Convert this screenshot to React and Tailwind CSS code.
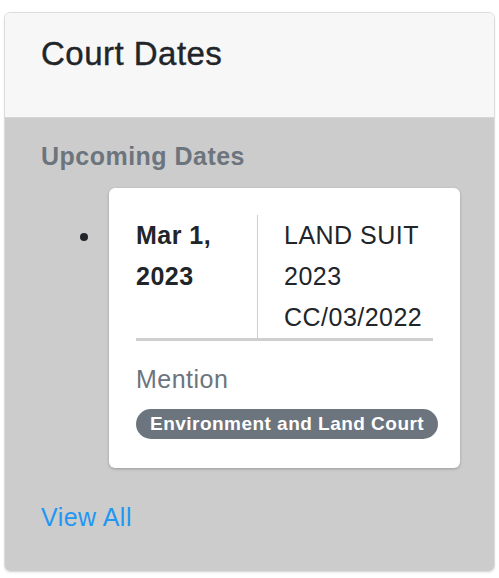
export default function App() {
  return (
    <div className="min-h-screen bg-white px-[4px] pt-[12px] font-['Liberation_Sans',Arial,sans-serif] tracking-[0.03em]">
      <div className="w-[491px] overflow-hidden rounded-[6px] border border-[#dcdcdc] shadow-[0_1px_2px_rgba(0,0,0,0.08)]">
        {/* Header */}
        <div className="h-[105px] border-b border-[#d6d6d6] bg-[#f7f7f7] px-[36px] pt-[21px]">
          <h3 className="text-[33px] leading-[1.2] text-[#212529] [-webkit-text-stroke:0.4px_#212529]">Court Dates</h3>
        </div>

        {/* Body */}
        <div className="bg-[#cccccc] px-[36px] pt-[23px] pb-[39px]">
          <h5 className="text-[25px] leading-[30px] font-bold text-[#6c757d]">Upcoming Dates</h5>

          <ul className="mt-[17px]">
            <li className="relative ml-[68px]">
              <span className="absolute left-[-29px] top-[45px] h-[8px] w-[8px] rounded-full bg-[#212529]" />
              <div className="w-[351px] rounded-[6px] bg-white p-[27px] pb-[29px] shadow-[0_1px_3px_rgba(0,0,0,0.25)]">
                <div className="flex border-b-[3px] border-[#cfcfcf] text-[25px] leading-[41px] text-[#212529]">
                  <div className="w-[122px] border-r border-[#cfcfcf] font-bold">
                    <div>Mar 1,</div>
                    <div>2023</div>
                  </div>
                  <div className="pl-[26px]">
                    <div>LAND SUIT</div>
                    <div>2023</div>
                    <div>CC/03/2022</div>
                  </div>
                </div>
                <p className="mt-[23px] text-[25px] leading-[30px] text-[#6c757d]">Mention</p>
                <div className="mt-[15px] flex">
                  <span className="h-[30px] whitespace-nowrap rounded-full bg-[#6c757d] px-[14px] text-[19px] leading-[30px] font-bold tracking-[0.025em] text-white">
                    Environment and Land Court
                  </span>
                </div>
              </div>
            </li>
          </ul>

          <a href="#" className="mt-[34px] block text-[25px] leading-[30px] text-[#2196f3]">
            View All
          </a>
        </div>
      </div>
    </div>
  );
}
